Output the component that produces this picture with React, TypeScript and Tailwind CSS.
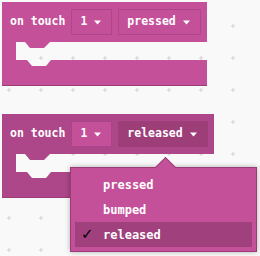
import React from 'react';

const mono = "font-['DejaVu_Sans_Mono','Liberation_Mono',monospace]";

function Caret() {
  return (
    <svg width="7" height="5" viewBox="0 0 7 5" className="shrink-0">
      <polygon points="0,0.5 7,0.5 3.5,4.5" fill="#ffffff" />
    </svg>
  );
}

function Field({ label, tone }: { label: string; tone: 'plain' | 'light' | 'dark' }) {
  const look =
    tone === 'dark'
      ? 'bg-[#9d3e79] border-[#9d3e79]'
      : tone === 'light'
        ? 'bg-[#c5509a] border-[#a9448a]'
        : 'bg-[#c5509a] border-[#ad468a]';
  return (
    <div className={`h-[26px] flex items-center gap-[7px] pl-[8px] pr-[10px] border ${look}`}>
      <span className="leading-none">{label}</span>
      <Caret />
    </div>
  );
}

function Block({ body, fields, children }: { body: string; fields: React.ReactNode; children?: React.ReactNode }) {
  return (
    <div className={`relative w-fit flex flex-col ${mono} text-[11.5px] font-bold text-white`}>
      <div className={`h-[40px] flex items-center gap-[6px] pl-[8px] pr-[6px] ${body}`}>
        <span className="leading-none">on touch</span>
        {fields}
      </div>
      <div className="flex h-[18px]">
        <div className={`w-[14px] ${body}`} />
        <svg width="40" height="18" viewBox="0 0 40 18" className="shrink-0">
          <polygon points="9,0 14,6 28,6 34,0" className={body === 'bg-[#c5509a]' ? 'fill-[#c5509a]' : 'fill-[#ad4789]'} />
        </svg>
      </div>
      <div className={`relative h-[26px] border-b border-[#9a3c75] ${body}`}>
        <svg width="40" height="8" viewBox="0 0 40 8" className="absolute left-[14px] top-0">
          <polygon points="11,0 16,6 30,6 35,0" fill="#f9f9f9" />
        </svg>
      </div>
      {children}
    </div>
  );
}

function Menu() {
  const items = ['pressed', 'bumped', 'released'];
  return (
    <div className="absolute left-[68px] top-[53px] z-10">
      <div className="absolute left-[88px] top-[-7px] w-[15px] h-[15px] rotate-45 bg-[#c5509a] border-t border-l border-[#9a3c75] z-20" />
      <div className="w-[187px] bg-[#c5509a] border border-[#9a3c75] p-[4px] shadow-[0_0_5px_rgba(0,0,0,0.3)] text-[12px]">
        {items.map(item => {
          const picked = item === 'released';
          return (
            <div key={item} className={`h-[25px] flex items-center ${picked ? 'bg-[#a0407c]' : ''}`}>
              <span className="w-[28px] pl-[6px] font-['DejaVu_Sans',sans-serif] text-[15px] font-normal text-black leading-none">
                {picked ? '✓' : ''}
              </span>
              <span className="leading-none">{item}</span>
            </div>
          );
        })}
      </div>
    </div>
  );
}

export default function App() {
  return (
    <div className="relative w-[260px] h-[256px] overflow-hidden bg-[#f9f9f9]">
      <svg className="absolute inset-0" width="260" height="256">
        <defs>
          <pattern id="grid" width="32" height="32" patternUnits="userSpaceOnUse">
            <path d="M7 26H11M9 24V28" stroke="#d2d2d2" strokeWidth="1" />
          </pattern>
        </defs>
        <rect width="260" height="256" fill="url(#grid)" />
      </svg>

      <div className="relative flex flex-col pl-[2px] pt-[2px] gap-[28px]">
        <Block
          body="bg-[#c5509a]"
          fields={
            <>
              <Field label="1" tone="plain" />
              <Field label="pressed" tone="plain" />
            </>
          }
        />
        <Block
          body="bg-[#ad4789]"
          fields={
            <>
              <Field label="1" tone="light" />
              <Field label="released" tone="dark" />
            </>
          }
        >
          <Menu />
        </Block>
      </div>
    </div>
  );
}
